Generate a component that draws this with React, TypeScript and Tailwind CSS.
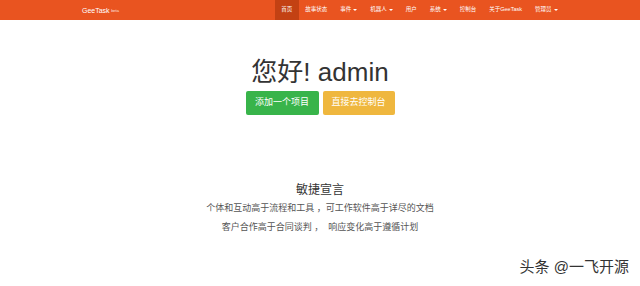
import React from "react";

const cjk = { fontFamily: '"Liberation Sans", "Noto Sans CJK SC", sans-serif' };

function Caret() {
  return (
    <span className="ml-[2px] inline-block h-0 w-0 border-x-[2px] border-t-[2px] border-x-transparent border-t-white align-middle" />
  );
}

const items: { label: string; caret?: boolean; active?: boolean }[] = [
  { label: "首页", active: true },
  { label: "故事状态" },
  { label: "事件", caret: true },
  { label: "机器人", caret: true },
  { label: "用户" },
  { label: "系统", caret: true },
  { label: "控制台" },
  { label: "关于GeeTask" },
  { label: "管理员", caret: true },
];

export default function App() {
  return (
    <div className="relative h-[286px] w-[640px] overflow-hidden bg-white" style={cjk}>
      <nav className="flex h-[20px] items-stretch bg-[#e95420] pl-[82px] pr-[76px]">
        <div className="flex items-center text-white">
          <span className="text-[7px] leading-none">GeeTask</span>
          <span className="ml-[1.5px] mt-[1px] text-[4px] leading-none text-white/80">beta</span>
        </div>
        <ul className="ml-auto flex items-stretch">
          {items.map((it) => (
            <li
              key={it.label}
              className={`flex items-center px-[6.5px] text-[5.5px] leading-none text-white ${
                it.active ? "bg-[#c34113]" : ""
              }`}
            >
              {it.label}
              {it.caret ? <Caret /> : null}
            </li>
          ))}
        </ul>
      </nav>

      <main className="flex flex-col items-center">
        <h1 className="mt-[38px] text-[26px] leading-[28px] text-[#333]">您好! admin</h1>
        <div className="mt-[5px] flex gap-[4px]">
          <button className="h-[24px] w-[73px] rounded-[2px] bg-[#38b44a] text-[9px] text-white">
            添加一个项目
          </button>
          <button className="h-[24px] w-[72px] rounded-[2px] bg-[#efb73e] text-[9px] text-white">
            直接去控制台
          </button>
        </div>

        <h2 className="mt-[68px] text-[12px] leading-[14px] text-[#333]">敏捷宣言</h2>
        <p className="mt-[5px] text-[9px] leading-[12px] text-[#555]">
          个体和互动高于流程和工具 ，可工作软件高于详尽的文档
        </p>
        <p className="mt-[7px] text-[9px] leading-[12px] text-[#555]">
          客户合作高于合同谈判 ，&nbsp;&nbsp;响应变化高于遵循计划
        </p>
      </main>

      <div
        className="absolute right-[11px] top-[257px] text-[15px] leading-[20px] text-[#333]"
        style={{ textShadow: "0 0 2px #fff, 0 0 2px #fff" }}
      >
        头条 @一飞开源
      </div>
    </div>
  );
}
